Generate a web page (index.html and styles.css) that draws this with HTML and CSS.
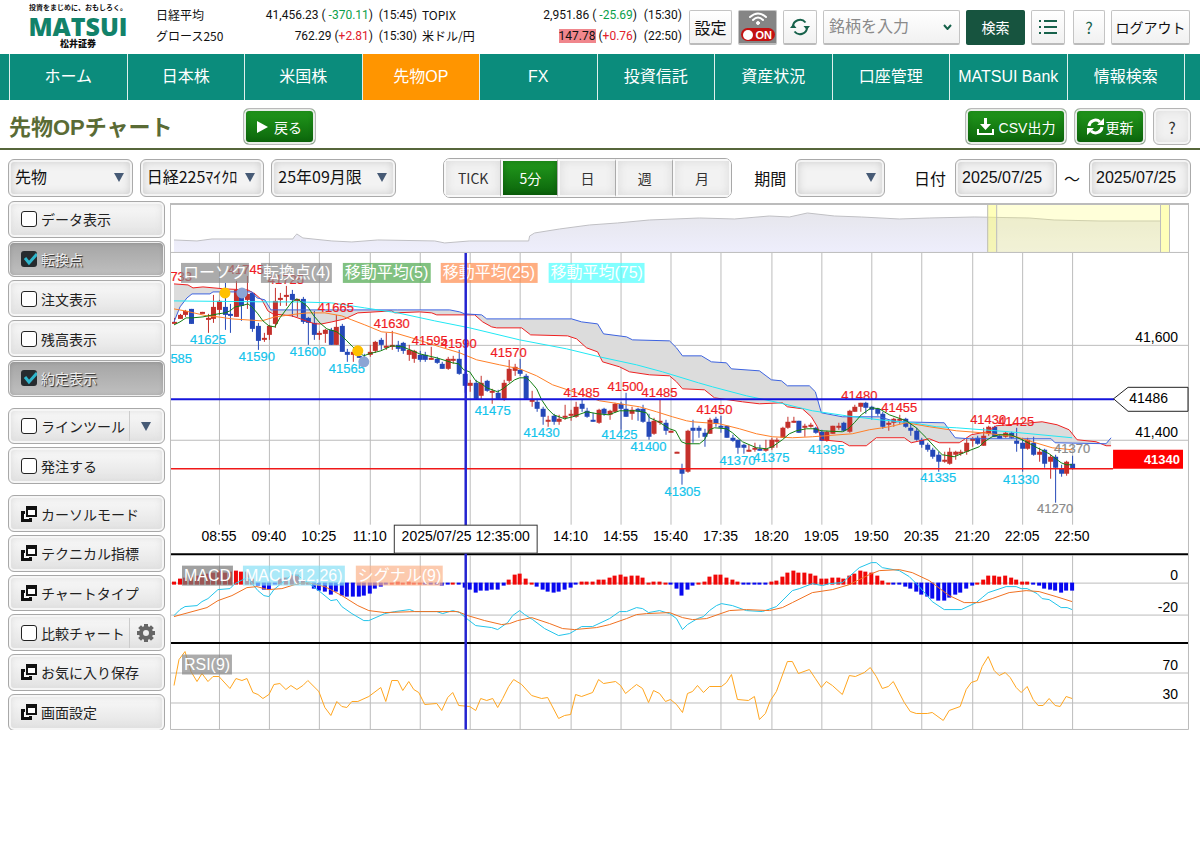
FILE: index.html
```html
<!DOCTYPE html>
<html lang="ja">
<head>
    <meta charset="UTF-8">
    <meta name="viewport" content="width=device-width, initial-scale=1.0">
    <title>先物OPチャート | 松井証券</title>
    <link rel="stylesheet" href="styles.css">
</head>
<body>
    <header class="header">
        <a class="logo" href="#">
            <span class="logo-copy">投資をまじめに、おもしろく。</span>
            <span class="logo-name">MATSUI</span>
            <span class="logo-sub">松井証券</span>
        </a>
        <div class="quotes">
            <span>日経平均</span>
            <span class="price">41,456.23 ( <span class="down">-370.11</span>)</span>
            <span class="price">(15:45)</span>
            <span>TOPIX</span>
            <span class="price">2,951.86 ( <span class="down">-25.69</span>)</span>
            <span class="price">(15:30)</span>
            <span>グロース250</span>
            <span class="price">762.29 (<span class="up">+2.81</span>)</span>
            <span class="price">(15:30)</span>
            <span>米ドル/円</span>
            <span class="price"><span class="flash">147.78</span> (<span class="up">+0.76</span>)</span>
            <span class="price">(22:50)</span>
        </div>
        <div class="tools">
            <button class="tool tool-setting">設定</button>
            <button class="tool tool-live" aria-label="自動更新">
                <svg width="20" height="14" viewBox="0 0 20 14" fill="none" stroke="#fff" stroke-width="2" stroke-linecap="round">
                    <path d="M2 5Q10 -2 18 5M5 8Q10 3 15 8"/>
                    <circle cx="10" cy="11" r="1.5" fill="#fff" stroke-width="1"/>
                </svg>
                <span class="live-pill"><i></i>ON</span>
            </button>
            <button class="tool tool-reload" aria-label="更新">
                <svg width="20" height="18" viewBox="0 0 20 18" fill="none" stroke="#17624b" stroke-width="2">
                    <path d="M3 9A7 7 0 0 1 15.500 4.500M17 9A7 7 0 0 1 4.500 13.500"/>
                    <path d="M13.500 8h6.500l-3.200 4zM0 10l3.200-4L6.500 10z" fill="#17624b" stroke="none"/>
                </svg>
            </button>
            <input class="tool stock" type="text" placeholder="銘柄を入力" aria-label="銘柄">
            <button class="tool tool-search">検索</button>
            <button class="tool tool-list" aria-label="一覧">
                <svg width="18" height="14" viewBox="0 0 18 14" stroke="#17624b" stroke-width="2">
                    <path d="M0 1h2M0 7h2M0 13h2M5 1h13M5 7h13M5 13h13"/>
                </svg>
            </button>
            <button class="tool tool-help">?</button>
            <button class="tool tool-logout">ログアウト</button>
        </div>
    </header>

    <nav class="nav">
        <a href="#">ホーム</a>
        <a href="#">日本株</a>
        <a href="#">米国株</a>
        <a href="#" class="current">先物OP</a>
        <a href="#">FX</a>
        <a href="#">投資信託</a>
        <a href="#">資産状況</a>
        <a href="#">口座管理</a>
        <a href="#">MATSUI Bank</a>
        <a href="#">情報検索</a>
    </nav>

    <div class="title-bar">
        <h1>先物OPチャート</h1>
        <button class="btn green btn-back">
            <svg width="11" height="12" viewBox="0 0 11 12"><path d="M0 0l11 6-11 6z" fill="#fff"/></svg>戻る
        </button>
        <div class="title-actions">
            <button class="btn green btn-csv">
                <svg width="17" height="17" viewBox="0 0 17 17" fill="#fff"><path d="M7 0h3v6h4l-5.500 6L3 6h4zM0 11h2v4h13v-4h2v6H0z"/></svg>CSV出力
            </button>
            <button class="btn green btn-update">
                <svg width="17" height="17" viewBox="0 0 17 17" fill="none" stroke="#fff" stroke-width="3">
                    <path d="M2 8a6.500 6.500 0 0 1 11-4M15 9a6.500 6.500 0 0 1-11 4"/>
                    <path d="M17 0v7h-7zM0 17v-7h7z" fill="#fff" stroke="none"/>
                </svg>更新
            </button>
            <button class="btn btn-q">?</button>
        </div>
    </div>

    <div class="toolbar">
        <select class="field" aria-label="商品"><option>先物</option></select>
        <select class="field" aria-label="銘柄種別"><option>日経225ﾏｲｸﾛ</option></select>
        <select class="field" aria-label="限月"><option>25年09月限</option></select>
        <div class="segments">
            <button>TICK</button>
            <button class="selected">5分</button>
            <button>日</button>
            <button>週</button>
            <button>月</button>
        </div>
        <label for="period">期間</label>
        <select class="field field-period" id="period"><option></option></select>
        <label class="label-date" for="date-from">日付</label>
        <input class="field field-date" id="date-from" type="text" value="2025/07/25">
        <span class="tilde">～</span>
        <input class="field field-date" id="date-to" type="text" value="2025/07/25" aria-label="終了日">
    </div>

    <svg class="defs" width="0" height="0">
        <symbol id="popup" viewBox="0 0 16 16">
            <path d="M0 5h11v11H0z" fill="#111"/>
            <path d="M3 8h5v5H3z" fill="#fff"/>
            <path d="M4 0h12v12H4z" fill="#f4f4f4"/>
            <path d="M5 0h11v11H5z" fill="#111"/>
            <path d="M7 4h7v5H7z" fill="#fff"/>
        </symbol>
    </svg>

    <main class="main">
        <aside class="side">
            <label class="side-item"><input type="checkbox">データ表示</label>
            <label class="side-item active"><input type="checkbox" checked>転換点</label>
            <label class="side-item"><input type="checkbox">注文表示</label>
            <label class="side-item"><input type="checkbox">残高表示</label>
            <label class="side-item active"><input type="checkbox" checked>約定表示</label>

            <div class="side-item group-start split">
                <label><input type="checkbox">ラインツール</label>
                <button aria-label="ラインを選択"><svg width="10" height="9" viewBox="0 0 10 9"><path d="M0 0h10L5 9z" fill="#465a75"/></svg></button>
            </div>
            <label class="side-item"><input type="checkbox">発注する</label>

            <button class="side-item group-start"><svg width="16" height="16"><use href="#popup"/></svg>カーソルモード</button>
            <button class="side-item"><svg width="16" height="16"><use href="#popup"/></svg>テクニカル指標</button>
            <button class="side-item"><svg width="16" height="16"><use href="#popup"/></svg>チャートタイプ</button>
            <div class="side-item split">
                <label><input type="checkbox">比較チャート</label>
                <button aria-label="比較設定">
                    <svg width="18" height="18" viewBox="-9 -9 18 18" fill="none" stroke="#666">
                        <circle r="5" stroke-width="4"/>
                        <path d="M0-9v3M0 9V6M-9 0h3M9 0H6M-6.400-6.400l2 2M6.400 6.400l-2-2M-6.400 6.400l2-2M6.400-6.400l-2 2" stroke-width="4"/>
                    </svg>
                </button>
            </div>
            <button class="side-item"><svg width="16" height="16"><use href="#popup"/></svg>お気に入り保存</button>
            <button class="side-item"><svg width="16" height="16"><use href="#popup"/></svg>画面設定</button>
        </aside>

        <section class="chart-area">
            <svg id="chart" class="chart" viewBox="170 203 1021 528" role="img" aria-label="日経225マイクロ 5分足チャート"></svg>
        </section>
    </main>

    <script src="chart.js"></script>
</body>
</html>
```

FILE: styles.css
```css
* {
    box-sizing: border-box;
}
body {
    margin: 0;
    background: #fff;
    color: #111;
    font-family: "Liberation Sans", "Noto Sans CJK JP", sans-serif;
    font-size: 16px;
}
button, input, select {
    font-family: inherit;
    color: inherit;
    margin: 0;
}
button {
    padding: 0;
    cursor: pointer;
}
a {
    color: inherit;
    text-decoration: none;
}
.defs {
    display: block;
}

/* ヘッダー */
.header {
    display: flex;
    align-items: center;
    height: 54px;
    padding: 0 10px 0 29px;
}
.logo {
    display: flex;
    flex-direction: column;
    align-items: center;
    width: 98px;
    height: 46px;
    font-weight: 700;
    white-space: nowrap;
}
.logo-copy {
    font-size: 7px;
    line-height: 8px;
}
.logo-name {
    font-family: "Open Sans", sans-serif;
    font-size: 25px;
    font-weight: 800;
    line-height: 28px;
    color: #12826a;
}
.logo-sub {
    font-size: 9px;
    line-height: 9px;
    font-weight: 900;
}
.quotes {
    display: grid;
    grid-template-columns: 80px 137px 44px 80px 140px 45px;
    row-gap: 3px;
    margin-left: 29px;
    padding-bottom: 4px;
    font-family: "Noto Sans CJK JP", sans-serif;
    font-size: 12px;
    line-height: 18px;
    white-space: nowrap;
}
.quotes > :nth-child(6n + 4) {
    padding-left: 5px;
}
.price {
    font-family: Roboto, sans-serif;
    text-align: right;
}
.down {
    color: #0aa04a;
}
.up {
    color: #e0202c;
}
.flash {
    background: #f0868c;
}
.tools {
    display: flex;
    gap: 6px;
    margin-left: auto;
}
.tool {
    display: flex;
    align-items: center;
    justify-content: center;
    height: 35px;
    border: 1px solid #c4c4c4;
    border-bottom: 2px solid #bbb;
    border-radius: 2px;
    background: linear-gradient(#fff, #f1f1f1);
    font-size: 16px;
}
.tool-setting {
    width: 43px;
}
.tool-live {
    flex-direction: column;
    gap: 2px;
    width: 39px;
    background: #858585;
}
.live-pill {
    display: flex;
    align-items: center;
    gap: 3px;
    width: 34px;
    height: 13px;
    padding: 0 2px;
    border-radius: 7px;
    background: #c41212;
    color: #fff;
    font-size: 11px;
    font-weight: 700;
}
.live-pill i {
    width: 10px;
    height: 10px;
    border-radius: 50%;
    background: #fff;
}
.tool-reload, .tool-list {
    width: 34px;
}
.stock {
    width: 137px;
    padding: 0 26px 0 5px;
    background: url("data:image/svg+xml,%3Csvg xmlns='http://www.w3.org/2000/svg' width='9' height='6'%3E%3Cpath d='M1 1l3.500 4L8 1' fill='none' stroke='%2317624b' stroke-width='2'/%3E%3C/svg%3E") no-repeat right 7px center, linear-gradient(#fff, #f1f1f1);
}
.stock::placeholder {
    color: #8a8a8a;
}
.tool-search {
    width: 59px;
    border-color: #17543f;
    background: #17543f;
    color: #fff;
    font-size: 14px;
}
.tool-help {
    width: 32px;
    margin-left: 2px;
    color: #17624b;
    font-family: "Noto Sans CJK JP", sans-serif;
    font-size: 16px;
}
.tool-logout {
    width: 79px;
    font-size: 14px;
}

/* メインナビ */
.nav {
    display: flex;
    height: 46px;
    padding: 0 15px 0 9px;
    background: #0b8c7c;
}
.nav a {
    flex: 1 1 0;
    border-left: 1px solid #dff0ed;
    color: #fff;
    line-height: 45px;
    text-align: center;
    white-space: nowrap;
}
.nav a:last-child {
    border-right: 1px solid #dff0ed;
}
.nav .current {
    background: #ff9500;
}

/* タイトル行 */
.title-bar {
    display: flex;
    align-items: center;
    height: 50px;
    padding: 5px 9px 0 9px;
    border-bottom: 2px solid #56663a;
}
h1 {
    margin: 0;
    width: 234px;
    padding-top: 2px;
    color: #5a6b35;
    font-size: 22px;
    line-height: 30px;
}
.title-actions {
    display: flex;
    gap: 7px;
    margin-left: auto;
}
.btn {
    display: flex;
    align-items: center;
    justify-content: center;
    gap: 5px;
    height: 37px;
    border: 1px solid #b4b4b4;
    border-radius: 6px;
    background: #f1f1f1;
    box-shadow: inset 0 0 0 2px #f4f4f4, inset 0 0 8px 2px #ddd;
    font-size: 14px;
    white-space: nowrap;
}
.btn.green {
    border-color: #b9b9b9;
    background: linear-gradient(#229a1c, #0b640b);
    box-shadow: inset 0 0 0 2px #e8ede8, inset 0 0 6px rgba(0, 50, 0, 0.4);
    color: #fff;
}
.btn-back {
    width: 73px;
    gap: 6px;
}
.btn-csv {
    width: 102px;
}
.btn-update {
    width: 72px;
    gap: 2px;
}
.btn-q {
    width: 38px;
    color: #333;
    font-family: "Noto Sans CJK JP", sans-serif;
    font-size: 16px;
}

/* 条件バー */
.toolbar {
    display: flex;
    align-items: center;
    gap: 7px;
    height: 51px;
    padding: 4px 9px 0 8px;
    white-space: nowrap;
}
.field {
    width: 125px;
    height: 38px;
    padding: 0 6px;
    border: 1px solid #aaa;
    border-radius: 6px;
    background-color: #f3f3f3;
    box-shadow: inset 0 0 0 2px #f4f4f4, inset 0 0 9px 2px #ccc;
    font-size: 16px;
}
select.field {
    appearance: none;
    padding-bottom: 4px;
    background-image: url("data:image/svg+xml,%3Csvg xmlns='http://www.w3.org/2000/svg' width='10' height='9'%3E%3Cpath d='M0 0h10L5 9z' fill='%23465a75'/%3E%3C/svg%3E");
    background-repeat: no-repeat;
    background-position: right 8px top 13px;
    font-family: "Noto Sans CJK JP", sans-serif;
}
select.field-period {
    width: 90px;
    margin-left: 2px;
}
.field-date {
    width: 102px;
    margin-left: 2px;
}
.label-date {
    margin-left: 22px;
}
.tilde {
    width: 16px;
}
.segments {
    display: flex;
    width: 290px;
    height: 40px;
    margin: 0 15px 0 40px;
    border: 1px solid #a8a8a8;
    border-radius: 7px;
    overflow: hidden;
}
.segments button {
    flex: 1 1 0;
    border: 2px solid #f8f8f8;
    border-right: 1px solid #aaa;
    background: #f2f2f2;
    box-shadow: inset 0 0 8px 1px #ddd;
    color: #333;
    font-family: "Noto Sans CJK JP", sans-serif;
    font-size: 14px;
}
.segments button:last-child {
    border-right: 2px solid #f8f8f8;
}
.segments .selected {
    background: linear-gradient(#229a1c, #0b640b);
    box-shadow: inset 0 0 6px rgba(0, 50, 0, 0.4);
    color: #fff;
}

/* サイドメニューとチャート */
.main {
    display: flex;
    gap: 5px;
    padding: 0 10px 0 8px;
}
.side {
    flex: 0 0 156px;
    display: flex;
    flex-direction: column;
    gap: 3px;
}
.side-item {
    flex: 1 1 0;
    display: flex;
    align-items: center;
    gap: 4px;
    min-height: 34px;
    padding: 0 0 0 12px;
    border: 1px solid #a8a8a8;
    border-radius: 6px;
    background: linear-gradient(#fafafa, #e2e2e2);
    box-shadow: inset 0 0 0 2px #f6f6f6, inset 0 0 7px 2px #ddd;
    color: #222;
    font-size: 14px;
    text-align: left;
    white-space: nowrap;
}
.side-item.group-start {
    margin-top: 8px;
}
.side-item.active {
    background: linear-gradient(#a4a4a4, #c0c0c0);
    box-shadow: inset 0 0 0 1px #eee, inset 0 0 5px rgba(0, 0, 0, 0.2);
    color: #eee;
    text-shadow: 1px 1px 1px #222;
}
.side-item input {
    appearance: none;
    flex: 0 0 16px;
    height: 16px;
    border: 1px solid #222;
    border-radius: 3px;
    background: #fff;
}
.side-item input:checked {
    border: none;
    background: #262b2e url("data:image/svg+xml,%3Csvg xmlns='http://www.w3.org/2000/svg' width='16' height='16'%3E%3Cpath d='M4 7l4 5 8-9' fill='none' stroke='%232fb6cc' stroke-width='3'/%3E%3C/svg%3E");
}
.split label {
    flex: 1;
    display: flex;
    align-items: center;
    gap: 4px;
}
.split button {
    display: flex;
    align-items: center;
    justify-content: center;
    width: 35px;
    height: 30px;
    padding-right: 3px;
    border: none;
    border-left: 1px solid #ccc;
    background: none;
}
.chart-area {
    flex: 1;
    min-width: 0;
    padding-top: 2px;
}
.chart {
    display: block;
    width: 100%;
    font-size: 14px;
}
.chart .grid {
    stroke: #bcbcbc;
    fill: none;
}
.chart .line {
    fill: none;
    stroke-width: 1;
}
.chart .mark {
    font-size: 13px;
    text-anchor: middle;
    stroke-width: 0.2;
}
.chart .high {
    fill: #f01c24;
    stroke: #f01c24;
}
.chart .low {
    fill: #14c4ec;
    stroke: #14c4ec;
}
.chart .edge {
    fill: #8a8a8a;
    stroke: #8a8a8a;
}
.chart .legend {
    fill: #fff;
    font-size: 16px;
}
.chart .time {
    text-anchor: middle;
}
.chart .value {
    text-anchor: end;
}
.chart .last {
    fill: #fff;
    font-weight: 700;
    font-size: 13px;
    text-anchor: end;
}
```

FILE: chart.js
```javascript
const NS = 'http://www.w3.org/2000/svg';
const chart = document.getElementById('chart');

const LEFT = 174.3;   // 最初の足のX座標
const STEP = 5.582;   // 足の間隔
const barX = i => LEFT + STEP * i;

function add(name, attrs, text) {
    const el = document.createElementNS(NS, name);
    for (const key in attrs) el.setAttribute(key, attrs[key]);
    if (text) el.textContent = text;
    chart.appendChild(el);
    return el;
}
const vline = (x, y1, y2, attrs) => add('path', { d: `M${x} ${y1}V${y2}`, ...attrs });
const hline = (y, x1, x2, attrs) => add('path', { d: `M${x1} ${y}H${x2}`, ...attrs });
const line = (points, color) => add('polyline', { points, class: 'line', stroke: color });

// r/b = 陽線/陰線, 実体上, 実体下, 高値, 安値
const candles = `r322,323,318,323 r315,319,314,319 r311,315,310,317 b309,324,309,324 - r312,313,312,313
r318,319,314,333 r307,319,295,323 r301,310,300,315 b307,315,283,330 b314,316,304,333 r290,317,281,317
b293,306,290,321 r294,300,276,309 b293,329,292,332 b326,341,323,350 r338,340,333,342 r326,335,325,340
r301,324,288,328 r298,300,293,306 r295,297,286,306 b294,300,290,317 r299,300,299,317 b299,322,297,324
b318,323,317,345 b323,335,311,340 r333,335,331,340 r330,334,329,343 b330,345,328,345 r327,345,315,345
b326,352,324,352 b352,355,349,362 r352,355,350,362 b356,357,350,358 b358,362,354,365 r352,355,345,357
r342,351,341,353 b340,345,338,350 r346,347,333,350 r345,347,331,350 b345,349,341,352 b343,351,342,354
r350,355,345,361 r351,359,350,363 b355,360,351,362 b355,360,352,362 r358,360,347,360 b359,363,357,364
b364,369,362,369 r359,369,357,370 r359,360,356,364 b359,374,350,375 b374,386,372,393 r383,386,380,392
b383,399,380,399 r383,396,376,400 b381,391,380,392 r391,392,389,404 b393,399,390,399 r383,399,380,401
r369,381,360,383 r367,371,364,376 b370,374,359,376 b376,399,374,399 r400,401,391,407 b402,409,399,412
b409,417,407,425 r420,421,416,427 b416,422,414,425 r419,422,415,425 r416,417,405,420 r414,416,410,421
r407,417,402,418 b404,409,399,412 b411,417,408,418 b420,422,413,422 r410,423,409,424 b409,414,408,416
r411,415,410,420 r404,412,403,413 b404,409,402,430 b409,417,393,417 r410,414,407,420 b409,412,408,421
b409,422,405,423 b422,437,414,440 r421,434,418,435 r421,423,400,425 b423,431,420,435 r431,432,431,432
r452,453,452,453 b469,474,464,485 r431,472,430,473 b428,431,420,443 b428,431,426,438 b433,437,429,447
r420,434,418,434 b419,424,417,427 b426,428,416,433 b426,438,426,438 b438,441,435,442 b440,448,440,454
b445,448,444,454 r450,451,445,452 r448,450,443,452 b449,450,445,451 r449,450,440,452 r440,448,438,450
r440,441,438,448 r428,438,427,438 r422,428,417,429 r421,423,417,423 b421,433,421,433 r426,428,424,437
r425,427,423,428 b428,433,427,434 b432,441,430,441 r432,441,431,442 r426,434,426,434 r426,428,423,430
b423,431,422,432 r411,432,410,433 r407,412,405,412 r403,407,403,412 b403,408,402,414 b407,410,406,420
b409,414,408,416 b414,427,412,429 r423,425,421,431 r419,423,418,427 r419,420,415,424 b419,427,418,428
b428,431,423,436 b431,440,428,441 b440,445,438,448 b445,450,443,452 b450,457,448,459 b455,462,452,472
r460,462,452,463 r452,464,448,465 r452,455,451,460 r452,454,450,456 r443,452,439,455 r439,441,437,447
b438,444,436,445 r436,446,428,446 r427,434,426,436 b427,437,426,437 b436,439,435,439 r433,437,432,438
b433,438,432,439 b441,444,428,452 b443,449,438,472 r440,449,438,450 b443,455,437,456 r452,455,448,462
b450,464,449,468 r457,462,455,479 b457,468,455,503 b469,474,465,477 r462,474,461,476 b464,469,456,470`;

const ma5 = '174,325 180,322 186,318 192,318 203,317 213,315 218,314 225,313 230,311 235,307 241,306 248,304 252,307 258,314 263,321 269,326 275,327 280,318 286,310 292,302 297,299 303,303 308,307 314,316 320,323 327,329 337,332 342,336 347,341 353,347 358,352 364,356 369,354 381,351 392,346 403,347 420,354 437,358 453,363 459,364 464,370 470,372 476,381 482,384 487,388 498,392 503,389 515,380 520,378 527,378 531,382 537,389 542,400 548,409 554,415 565,419 573,417 587,412 598,414 609,415 620,411 637,411 647,413 650,418 659,422 670,429 676,431 682,442 687,444 700,444 705,440 710,430 715,428 727,429 733,433 743,442 757,448 767,449 773,447 783,440 790,434 797,431 807,429 815,429 822,431 843,432 849,429 855,423 862,415 872,408 880,409 890,415 907,421 917,428 927,438 938,450 943,455 955,457 967,452 980,447 985,442 993,437 1000,435 1012,435 1027,442 1038,448 1050,454 1062,463 1067,465 1073,465';
const ma25 = '174,309 185,311 207,316 218,317 232,319 262,321 275,317 298,314 308,313 325,313 342,316 352,320 365,325 382,332 395,333 412,338 440,347 460,353 477,360 500,365 520,369 537,376 553,385 577,393 600,401 620,404 640,407 657,412 673,417 687,421 693,422 720,424 740,429 757,434 773,437 793,438 813,437 853,434 870,430 890,427 907,423 930,427 957,431 983,433 1017,437 1033,442 1053,448 1073,450';
const ma75 = '174,301 270,302 298,302 332,303 365,308 398,313 435,321 470,328 520,340 567,349 600,357 637,365 663,372 699,383 713,387 747,396 780,403 813,411 847,416 880,420 913,423 937,427 957,428 1010,432 1073,438';
const spanA = '174,284 188,285 193,288 203,287 225,289 248,290 255,294 262,300 268,311 273,314 292,316 315,324 322,324 332,322 345,319 358,313 392,311 395,313 420,312 432,313 437,315 475,315 483,322 492,327 497,328 522,328 531,335 568,336 577,339 587,348 598,352 603,362 620,367 630,372 650,375 670,376 677,382 683,389 705,390 715,398 743,402 760,404 783,403 788,407 803,409 812,417 818,427 822,440 843,442 850,446 867,446 877,438 905,438 912,443 930,439 940,443 960,443 972,435 988,432 997,426 1043,422 1058,425 1070,430 1078,440 1097,442 1107,446 1112,446';
const spanB = '174,322 180,307 187,298 192,294 210,294 213,292 252,292 257,298 265,300 271,310 398,310 450,310 460,312 465,314 482,315 487,319 572,319 582,322 598,324 604,334 627,337 633,340 670,341 677,348 683,356 702,356 712,362 727,363 732,369 760,371 772,380 782,381 788,386 810,386 816,392 822,413 843,417 880,417 897,422 945,423 950,430 956,438 970,439 1052,439 1056,443 1107,444 1112,438';

const histogram = [2, 5, 6, 7, 8, 9, 10, 11, 13, 11, 12, 13, 12, 12, 5, -2, -6, -6, -1, 5, 6, 9, 9, 4, 1, -5, -7, -8, -11, -8, -12, -13, -13, -13, -12, -10, -5, -3, -1, 1, 2, 1, 2, 1, 1, -1, -1, -1, -2, -1, 1, -1, -4, -6, -9, -7, -7, -6, -6, -2, 4, 9, 10, 5, 1, -3, -6, -8, -9, -8, -6, -4, -1, 2, 2, 2, 4, 4, 6, 8, 9, 7, 8, 8, 6, 1, 2, 2, 1, -1, -5, -12, -6, -2, 1, 2, 7, 9, 9, 6, 4, 2, -1, -1, -1, -1, -1, 2, 3, 7, 11, 13, 11, 11, 10, 8, 5, 5, 6, 6, 5, 8, 10, 13, 12, 11, 8, 3, 1, -1, -1, -3, -5, -8, -11, -13, -15, -17, -17, -14, -11, -9, -5, -2, 1, 4, 8, 8, 7, 8, 6, 4, 2, 2, -1, -2, -5, -6, -7, -9, -7, -7];
const macd = '174,616 180,610 185,607 197,606 202,602 208,599 218,590 230,589 235,584 243,580 248,578 253,585 258,591 264,596 269,597 274,590 280,585 292,575 298,576 308,583 320,592 331,601 337,600 342,607 352,614 364,621 369,621 385,614 395,612 410,610 415,612 437,612 443,614 453,611 460,613 467,619 476,626 492,628 498,630 508,623 513,616 520,611 525,615 533,620 545,629 559,636 570,634 582,627 593,627 610,619 620,612 627,612 637,608 643,609 649,613 660,611 670,614 677,619 683,630 688,625 698,619 704,617 710,611 717,606 722,604 733,606 747,611 763,612 777,607 793,591 800,589 813,584 823,586 830,584 843,583 860,568 872,563 877,563 883,568 900,571 910,577 920,587 933,602 945,610 962,610 977,603 983,598 989,593 1007,587 1017,587 1022,589 1028,589 1038,594 1043,599 1050,600 1062,608 1068,608 1073,610';
const signal = '174,617 185,614 207,608 218,601 232,596 247,588 257,587 268,590 282,589 298,584 308,583 325,587 342,596 358,606 369,611 385,613 415,612 458,612 468,616 485,621 502,625 510,624 518,621 532,618 550,624 563,629 575,630 597,628 610,625 627,619 637,615 647,614 670,613 683,618 693,620 707,619 730,611 747,610 770,611 783,608 793,603 813,593 833,590 850,585 870,575 880,571 900,570 913,573 930,581 950,596 965,603 980,603 993,599 1010,593 1027,591 1040,592 1057,597 1073,602';
const rsi = '174,686 179,660 185,652 191,672 197,682 202,674 208,682 213,677 219,677 230,689 236,679 242,681 247,679 253,693 258,695 263,699 269,695 274,685 280,684 286,690 291,686 297,690 303,686 308,681 319,692 325,708 331,716 337,702 342,707 347,708 352,702 358,702 369,697 381,688 386,702 392,681 398,681 403,691 409,682 414,690 419,693 425,705 437,704 442,711 448,698 453,693 459,706 470,707 476,711 481,699 487,701 493,699 498,708 503,699 509,687 514,680 522,685 532,696 542,699 548,698 559,719 565,716 571,715 576,695 582,697 593,693 599,680 604,684 616,682 621,686 626,694 632,689 637,685 643,689 649,703 654,691 660,694 666,702 671,700 677,705 683,713 688,694 693,692 698,686 704,693 710,687 722,687 727,683 732,675 738,700 749,701 755,697 760,720 766,714 771,701 777,692 788,662 793,662 799,674 810,670 816,679 822,688 827,682 833,686 843,695 850,676 856,677 865,673 871,668 877,677 883,689 889,687 894,682 905,703 911,712 917,714 928,714 933,713 944,721 950,711 961,707 967,690 972,683 978,681 983,667 989,657 995,671 1000,676 1006,673 1011,678 1017,688 1022,693 1028,687 1034,700 1039,706 1044,706 1050,699 1056,706 1061,707 1067,697 1073,699';
const overview = '174,240 197,241 212,239 293,239 295,236 297,234 303,238 332,241 352,242 378,240 435,241 445,243 470,241 529,241 530,236 535,233 560,229 590,225 618,223 650,220 700,218 735,219 770,216 790,217 808,213 835,216 862,217 900,219 930,218 975,217 1030,218 1055,220 1100,221 1161,221';

const times = ['08:55', '09:40', '10:25', '11:10', '', '', '', '14:10', '14:55', '15:40', '17:35', '18:20', '19:05', '19:50', '20:35', '21:20', '22:05', '22:50'];

// 転換点: 種別, 中心X, ベースラインY, 値
const marks = [
    ['high', 174, 281, '41733'], ['high', 246, 274, '41745'], ['high', 286, 284, '41725'],
    ['high', 336, 312, '41665'], ['high', 392, 328, '41630'], ['high', 430, 345, '41595'],
    ['high', 459, 348, '41590'], ['high', 509, 357, '41570'], ['high', 582, 397, '41485'],
    ['high', 626, 391, '41500'], ['high', 660, 397, '41485'], ['high', 715, 414, '41450'],
    ['high', 860, 400, '41480'], ['high', 900, 412, '41455'], ['high', 989, 424, '41430'],
    ['high', 1017, 426, '41425'],
    ['low', 174, 363, '41585'], ['low', 208, 344, '41625'], ['low', 257, 361, '41590'],
    ['low', 308, 356, '41600'], ['low', 347, 373, '41565'], ['low', 493, 415, '41475'],
    ['low', 542, 437, '41430'], ['low', 620, 439, '41425'], ['low', 649, 451, '41400'],
    ['low', 683, 496, '41305'], ['low', 738, 465, '41370'], ['low', 772, 462, '41375'],
    ['low', 827, 454, '41395'], ['low', 939, 482, '41335'], ['low', 1022, 484, '41330'],
    ['edge', 1073, 453, '41370'], ['edge', 1056, 513, '41270']
];

// 凡例: X, Y, 幅, 背景色, 文字
const legends = [
    [181, 263, 68, '#888', 'ローソク'], [261, 263, 71, '#888', '転換点(4)'],
    [343, 263, 88, '#4ca64c', '移動平均(5)'], [441, 263, 97, '#ff8c4d', '移動平均(25)'],
    [549, 263, 96, '#4dffff', '移動平均(75)'],
    [182, 566, 51, '#777', 'MACD'], [243, 566, 102, '#87dff5', 'MACD(12,26)'],
    [356, 566, 87, '#fbb48c', 'シグナル(9)'], [182, 655, 50, '#888', 'RSI(9)']
];

// 全体チャートと選択範囲
chart.innerHTML = `<defs>
    <linearGradient id="fade" x2="0" y2="1"><stop offset="0" stop-color="#e6e6ec"/><stop offset="1" stop-color="#eeeefc"/></linearGradient>
    <clipPath id="plot"><rect x="171" y="204" width="1018" height="527"/></clipPath>
</defs>`;
add('polygon', { points: `174,252 ${overview} 1161,252`, fill: 'url(#fade)' });
line(overview, '#c0c0c4');
add('rect', { x: 988, y: 205, width: 182, height: 47, fill: '#ffff66', 'fill-opacity': 0.25 });
for (const x of [988, 1161]) {
    add('rect', { x, y: 205, width: 9, height: 47, fill: '#ffff70', 'fill-opacity': 0.3 });
    vline(x + 0.5, 205, 252, { class: 'grid' });
    vline(x + 9.5, 205, 252, { class: 'grid' });
}

// 目盛線
times.forEach((t, i) => {
    const x = Math.round(barX(8 + i * 9)) + 0.5;
    vline(x, 253, 525, { class: 'grid' });
    vline(x, 556, 730, { class: 'grid' });
});
for (const y of [345.5, 440.5, 583.5, 615.5, 673.5, 703.5]) hline(y, 171, 1189, { class: 'grid' });
add('path', { d: 'M171 204.500H1189.500V730H170.500V204M171 252.500H1189', class: 'grid' });
hline(204, 170, 1190, { class: 'grid', 'stroke-width': 2 });

// 雲
add('polygon', { points: spanA + ' ' + spanB.split(' ').reverse().join(' '), fill: '#dcdcdc' });

// ローソク足
candles.split(/\s+/).forEach((c, i) => {
    if (c === '-') return;
    const color = c[0] === 'r' ? '#c4302b' : '#2448b8';
    const [top, bottom, high, low] = c.slice(1).split(',').map(Number);
    const x = Math.round(barX(i));
    vline(x + 0.5, high, low, { stroke: color });
    add('rect', { x: x - 2, y: top, width: 5, height: Math.max(2, bottom - top), fill: color });
});

line(spanA, '#ee2020');
line(spanB, '#3c62e0');
line(ma75, '#20e8f4');
line(ma25, '#ff7f27');
line(ma5, '#118011');

hline(469, 171, 1114, { stroke: '#f01818', 'stroke-width': 1.5 });

// MACD
histogram.forEach((v, i) => add('rect', {
    x: Math.round(barX(i)) - 2, y: v > 0 ? 584 - v : 583, width: 4,
    height: Math.abs(v) + 1, fill: v > 0 ? '#f00808' : '#0808f0'
}));
line(macd, '#22c4ea');
line(signal, '#f07020');
line(rsi, '#ffa51e');

hline(554.5, 171, 1189, { stroke: '#000', 'stroke-width': 2 });
hline(643.5, 171, 1189, { stroke: '#000', 'stroke-width': 2 });

for (const [type, x, y, text] of marks) {
    add('text', { x, y, class: 'mark ' + type, 'clip-path': 'url(#plot)' }, text);
}
for (const [x, y, color] of [[225, 293, '#ffc000'], [242, 293, '#8ca4d4'], [358, 351, '#ffc000'], [364, 362, '#8ca4d4']]) {
    add('circle', { cx: x, cy: y, r: 5.5, fill: color });
}
for (const [x, y, width, fill, text] of legends) {
    add('rect', { x, y, width, height: 20, fill, 'fill-opacity': 0.7 });
    add('text', { x: x + 2, y: y + 15, class: 'legend' }, text);
}

// カーソル
hline(399.5, 171, 1115, { stroke: '#1414dc', 'stroke-width': 2 });
vline(466, 253, 730, { stroke: '#2424d0', 'stroke-width': 2.5 });

times.forEach((t, i) => add('text', { x: Math.round(barX(8 + i * 9)), y: 541, class: 'time' }, t));
add('rect', { x: 394.5, y: 525.5, width: 143, height: 28, fill: '#fff', stroke: '#333' });
add('text', { x: 466, y: 541, class: 'time' }, '2025/07/25 12:35:00');

for (const [y, text] of [[342, '41,600'], [437, '41,400'], [580, '0'], [612, '-20'], [670, '70'], [700, '30']]) {
    add('text', { x: 1179, y, class: 'value' }, text);
}
add('path', { d: 'M1114.500 399L1129 387.500H1189V411.500H1129z', fill: '#fff', stroke: '#222' });
add('text', { x: 1169, y: 403, class: 'value' }, '41486');
add('rect', { x: 1114, y: 450, width: 70, height: 19, fill: '#f00' });
add('text', { x: 1181, y: 464, class: 'last' }, '41340');
```
